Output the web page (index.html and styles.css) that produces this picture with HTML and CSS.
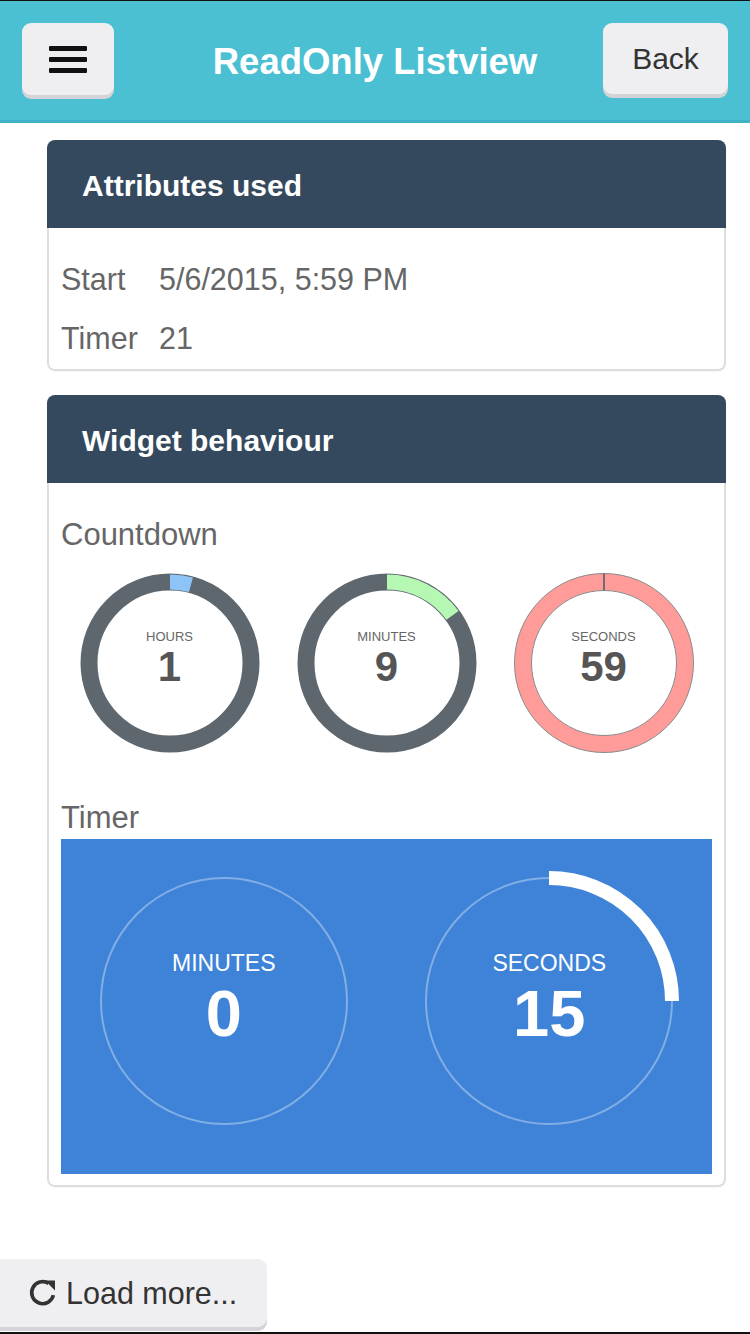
FILE: index.html
```html
<!DOCTYPE html>
<html lang="en">
<head>
<meta charset="utf-8">
<title>ReadOnly Listview</title>
<link rel="stylesheet" href="styles.css">
</head>
<body>
<div class="page">
  <header class="topbar">
    <button class="btn btn-menu" aria-label="Menu">
      <span class="bar"></span><span class="bar"></span><span class="bar"></span>
    </button>
    <h1 class="title">ReadOnly Listview</h1>
    <button class="btn btn-back">Back</button>
  </header>

  <main class="list">
    <section class="card">
      <div class="card-head">Attributes used</div>
      <div class="card-body attrs">
        <div class="attr-label">Start</div><div class="attr-value">5/6/2015, 5:59 PM</div>
        <div class="attr-label">Timer</div><div class="attr-value">21</div>
      </div>
    </section>

    <section class="card">
      <div class="card-head">Widget behaviour</div>
      <div class="card-body">
        <div class="section-label">Countdown</div>
        <div class="rings">
          <div class="ring">
            <svg width="180" height="180" viewBox="0 0 180 180">
              <circle cx="90" cy="90" r="81" fill="none" stroke="#5f676e" stroke-width="17"/>
              <path d="M90 9 A81 81 0 0 1 110.96 11.76" fill="none" stroke="#8dc4f7" stroke-width="15"/>
            </svg>
            <div class="ring-text"><span class="ring-label">HOURS</span><span class="ring-num">1</span></div>
          </div>
          <div class="ring">
            <svg width="180" height="180" viewBox="0 0 180 180">
              <circle cx="90" cy="90" r="81" fill="none" stroke="#5f676e" stroke-width="17"/>
              <path d="M90 9 A81 81 0 0 1 155.5 42.4" fill="none" stroke="#b5f7b3" stroke-width="15"/>
            </svg>
            <div class="ring-text"><span class="ring-label">MINUTES</span><span class="ring-num">9</span></div>
          </div>
          <div class="ring">
            <svg width="180" height="180" viewBox="0 0 180 180">
              <circle cx="90" cy="90" r="81" fill="none" stroke="#ff9c9a" stroke-width="17"/>
              <circle cx="90" cy="90" r="89.5" fill="none" stroke="#8a8a8a" stroke-width="1"/>
              <circle cx="90" cy="90" r="72.5" fill="none" stroke="#8a8a8a" stroke-width="1"/>
              <line x1="90" y1="0.5" x2="90" y2="17.5" stroke="#6f6f6f" stroke-width="2"/>
            </svg>
            <div class="ring-text"><span class="ring-label">SECONDS</span><span class="ring-num">59</span></div>
          </div>
        </div>

        <div class="section-label timer-label">Timer</div>
        <div class="timer-box">
          <div class="timer-cell">
            <svg width="264" height="264" viewBox="0 0 264 264">
              <circle cx="132" cy="132" r="123" fill="none" stroke="rgba(255,255,255,0.35)" stroke-width="2"/>
            </svg>
            <div class="timer-text"><span class="timer-label-sm">MINUTES</span><span class="timer-num">0</span></div>
          </div>
          <div class="timer-cell">
            <svg width="264" height="264" viewBox="0 0 264 264">
              <circle cx="132" cy="132" r="123" fill="none" stroke="rgba(255,255,255,0.35)" stroke-width="2"/>
              <path d="M132 9 A123 123 0 0 1 255 132" fill="none" stroke="#ffffff" stroke-width="14"/>
            </svg>
            <div class="timer-text"><span class="timer-label-sm">SECONDS</span><span class="timer-num">15</span></div>
          </div>
        </div>
      </div>
    </section>
  </main>

  <div class="more">
    <button class="btn btn-more">
      <svg class="refresh" width="30" height="30" viewBox="0 0 30 30">
        <path d="M25.4 17.2 A11 11 0 1 1 20.6 5.4" fill="none" stroke="#333" stroke-width="3.6"/>
        <polygon points="17,2.5 27,2.5 27,12.5" fill="#333"/>
      </svg>
      <span>Load more...</span>
    </button>
  </div>

  <div class="bottom-line"></div>
</div>
</body>
</html>
```

FILE: styles.css
```css
* {
  box-sizing: border-box;
}

html, body {
  margin: 0;
  padding: 0;
  background: #ffffff;
}

body {
  font-family: "Liberation Sans", Helvetica, Arial, sans-serif;
  color: #666666;
}

.page {
  width: 750px;
  min-height: 1334px;
  display: flex;
  flex-direction: column;
}

/* Top bar */
.topbar {
  border-top: 1px solid #111111;
  background: #4bc0d3;
  border-bottom: 3px solid #40b2c5;
  height: 123px;
  padding: 22px 22px 0 22px;
  display: grid;
  grid-template-columns: 1fr auto 1fr;
  align-content: start;
  align-items: start;
}

.btn {
  font-family: inherit;
  border: none;
  background: #efeff1;
  border-radius: 9px;
  box-shadow: 0 4px 0 #d3d3d9;
  cursor: pointer;
  padding: 0;
}

.btn-menu {
  justify-self: start;
  width: 92px;
  height: 72px;
  display: flex;
  flex-direction: column;
  align-items: center;
  justify-content: center;
  gap: 6px;
}

.bar {
  display: block;
  width: 38px;
  height: 5px;
  background: #111111;
  border-radius: 1px;
}

.title {
  margin: 0;
  align-self: center;
  margin-top: 6px;
  font-size: 36.5px;
  font-weight: bold;
  color: #ffffff;
  text-align: center;
  white-space: nowrap;
}

.btn-back {
  justify-self: end;
  width: 125px;
  height: 71px;
  font-size: 30px;
  color: #333333;
}

/* List */
.list {
  padding: 17px 24px 0 47px;
  display: flex;
  flex-direction: column;
  gap: 24px;
}

.card {
  display: flex;
  flex-direction: column;
  box-shadow: 0 1px 1px rgba(0, 0, 0, 0.04);
  border-radius: 8px;
}

.card-head {
  background: #35495e;
  color: #ffffff;
  height: 88px;
  border-radius: 8px 8px 0 0;
  padding-left: 35px;
  padding-top: 3px;
  display: flex;
  align-items: center;
  font-size: 30px;
  font-weight: bold;
}

.card-body {
  border: 2px solid #dedede;
  border-top: none;
  border-radius: 0 0 8px 8px;
  padding: 31px 12px 11px 12px;
}

.attrs {
  display: grid;
  grid-template-columns: 98px 1fr;
  row-gap: 17px;
  padding-top: 30px;
  padding-bottom: 10px;
  font-size: 30.5px;
  line-height: 42px;
}

.section-label {
  font-size: 31px;
  line-height: 42px;
  color: #666666;
}

.rings {
  margin-top: 17px;
  display: grid;
  grid-template-columns: repeat(3, 1fr);
}

.ring {
  position: relative;
  justify-self: center;
  width: 180px;
  height: 180px;
}

.ring svg {
  display: block;
}

.ring-text {
  position: absolute;
  inset: 0;
  display: flex;
  flex-direction: column;
  align-items: center;
  justify-content: center;
  padding-bottom: 9px;
}

.ring-label {
  font-size: 13px;
  line-height: 16px;
  color: #666666;
}

.ring-num {
  font-size: 42px;
  line-height: 44px;
  font-weight: bold;
  color: #555555;
}

.timer-label {
  margin-top: 44px;
}

.timer-box {
  background: #3e83d7;
  height: 335px;
  padding-top: 30px;
  display: grid;
  grid-template-columns: 1fr 1fr;
  align-items: start;
}

.timer-cell {
  position: relative;
  justify-self: center;
  width: 264px;
  height: 264px;
}

.timer-cell svg {
  display: block;
}

.timer-text {
  position: absolute;
  inset: 0;
  display: flex;
  flex-direction: column;
  align-items: center;
  justify-content: center;
  gap: 6px;
  padding-bottom: 6px;
  color: #ffffff;
}

.timer-label-sm {
  font-size: 23px;
  line-height: 26px;
}

.timer-num {
  font-size: 65px;
  line-height: 64px;
  font-weight: bold;
}

/* Load more */
.more {
  margin-top: 72px;
  display: flex;
}

.btn-more {
  width: 267px;
  height: 68px;
  border-radius: 0 9px 9px 0;
  display: flex;
  align-items: center;
  padding-left: 28px;
  gap: 8px;
  font-size: 30.5px;
  color: #333333;
}

.refresh {
  display: block;
  flex: none;
}

.bottom-line {
  margin-top: auto;
  height: 2px;
  background: #111111;
}
```
